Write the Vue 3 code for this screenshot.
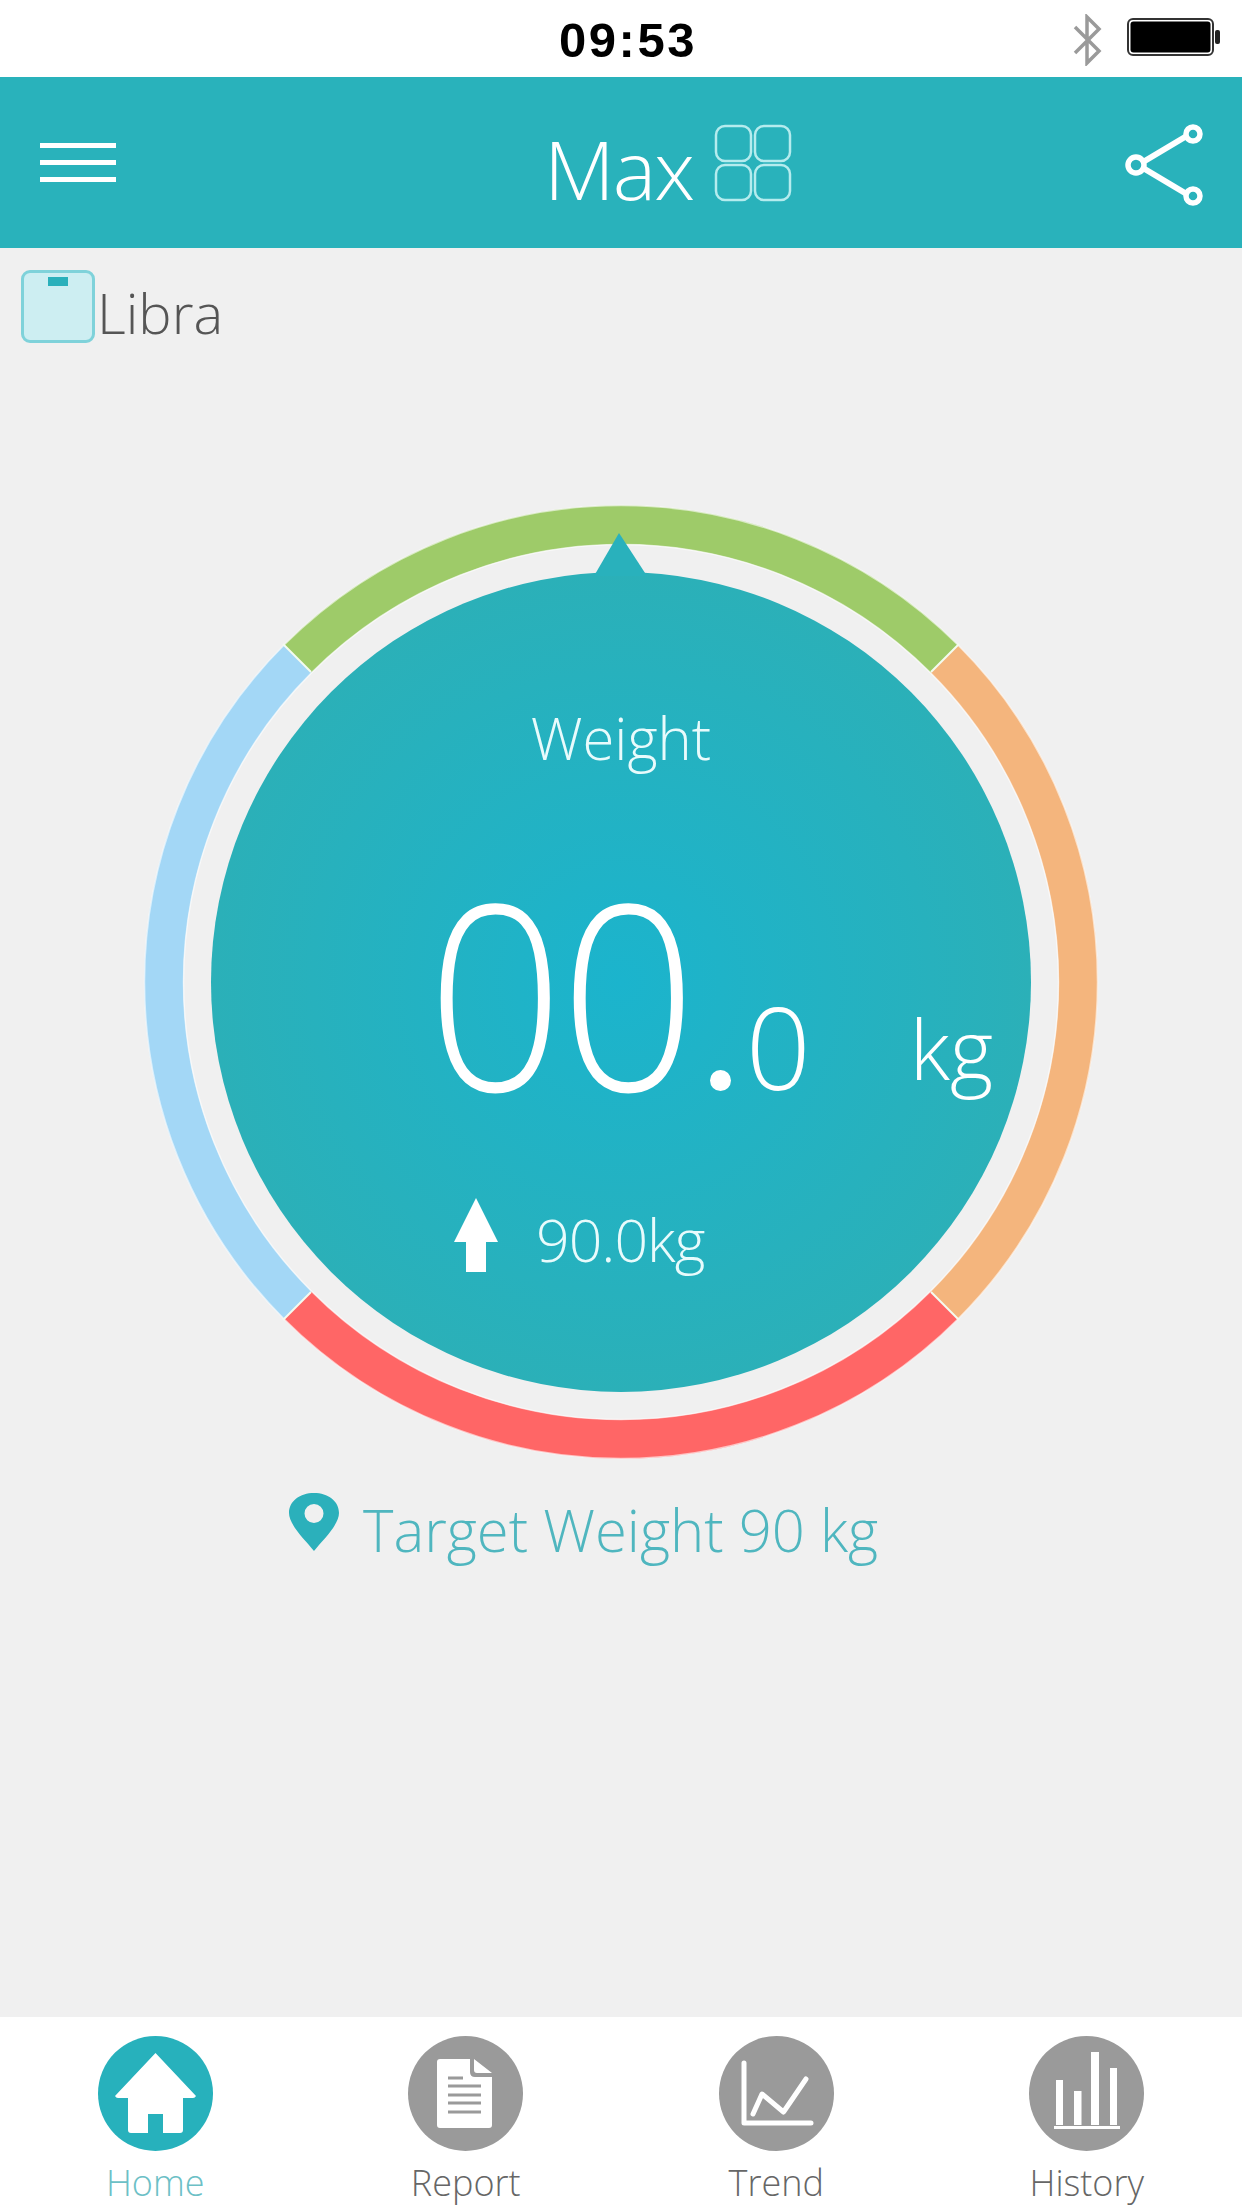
<script setup>
const tabs = [
  { key: 'home', label: 'Home', active: true },
  { key: 'report', label: 'Report' },
  { key: 'trend', label: 'Trend' },
  { key: 'history', label: 'History' },
]
</script>

<template>
  <div class="screen">
    <div class="status">
      <span class="time">09:53</span>
      <div class="status-right">
        <svg class="bt" width="32" height="52" viewBox="0 0 32 52"><path d="M4 13 L28 37 L16 49 V3 L28 15 L4 39" fill="none" stroke="#9a9a9a" stroke-width="3.5"/></svg>
        <svg class="battery" width="95" height="38" viewBox="0 0 95 38">
          <rect x="1" y="1" width="85" height="36" rx="5" fill="#fff" stroke="#333" stroke-width="2"/>
          <rect x="3.5" y="3.5" width="80" height="31" rx="3" fill="#000"/>
          <rect x="88" y="12" width="5" height="14" rx="2" fill="#222"/>
        </svg>
      </div>
    </div>

    <header class="header">
      <div class="burger"><i></i><i></i><i></i></div>
      <div class="title">
        <span>Max</span>
        <svg width="78" height="78" viewBox="0 0 78 78">
          <g fill="none" stroke="#b5ecee" stroke-width="2.5">
            <rect x="2" y="2" width="35" height="35" rx="9"/>
            <rect x="41" y="2" width="35" height="35" rx="9"/>
            <rect x="2" y="41" width="35" height="35" rx="9"/>
            <rect x="41" y="41" width="35" height="35" rx="9"/>
          </g>
        </svg>
      </div>
      <svg class="share" width="82" height="82" viewBox="0 0 82 82">
        <path d="M14 41 L66 10 M14 41 L66 72" stroke="#fff" stroke-width="6" fill="none"/>
        <g fill="#29b2bb" stroke="#fff" stroke-width="5.5">
          <circle cx="12" cy="41" r="8"/><circle cx="69" cy="10" r="7"/><circle cx="69" cy="72" r="7"/>
        </g>
      </svg>
    </header>

    <main class="main">
      <div class="device">
        <span class="scale"><i></i></span>
        <span class="device-name">Libra</span>
      </div>

      <div class="gauge">
        <svg width="956" height="956" viewBox="0 0 956 956">
          <defs>
            <radialGradient id="disc" cx="50%" cy="50%" r="50%">
              <stop offset="0%" stop-color="#1bb4cd"/>
              <stop offset="100%" stop-color="#2bb0b8"/>
            </radialGradient>
          </defs>
          <g fill="none" stroke-width="39">
            <path d="M154.7 154.7 A457 457 0 0 1 801.3 154.7" stroke="#9ecb69"/>
            <path d="M801.3 154.7 A457 457 0 0 1 801.3 801.3" stroke="#f4b57d"/>
            <path d="M801.3 801.3 A457 457 0 0 1 154.7 801.3" stroke="#ff6666"/>
            <path d="M154.7 801.3 A457 457 0 0 1 154.7 154.7" stroke="#a3d7f6"/>
          </g>
          <g fill="none" stroke="#fff" stroke-opacity=".6" stroke-width="1.5">
            <circle cx="478" cy="478" r="476.5"/>
            <circle cx="478" cy="478" r="437.5"/>
          </g>
          <path d="M140 140 L168 168 M816 140 L788 168 M816 816 L788 788 M140 816 L168 788" stroke="#f4fbef" stroke-width="2"/>
          <circle cx="478" cy="478" r="410" fill="url(#disc)"/>
          <path d="M451 72 L476 29 L504 72 Z" fill="#29b1bc"/>
        </svg>
        <div class="readout">
          <div class="label">Weight</div>
          <div class="value">
            <span class="big">00</span><span class="dot"></span><span class="dec">0</span><span class="unit">kg</span>
          </div>
          <div class="last">
            <svg width="44" height="74" viewBox="0 0 44 74"><path d="M22 0 L44 44 H32 V74 H12 V44 H0 Z" fill="#fff"/></svg>
            <span>90.0kg</span>
          </div>
        </div>
      </div>

      <div class="target">
        <svg width="50" height="58" viewBox="0 0 50 58"><path fill-rule="evenodd" d="M25 0 C39 0 50 8 50 20 C50 32 33 48 25 58 C17 48 0 32 0 20 C0 8 11 0 25 0 Z M25 11 A9.5 9.5 0 1 0 25 30 A9.5 9.5 0 1 0 25 11 Z" fill="#2bb0bb"/></svg>
        <span>Target Weight 90 kg</span>
      </div>
    </main>

    <nav class="tabs">
      <div v-for="t in tabs" :key="t.key" class="tab" :class="{ active: t.active }">
        <svg width="115" height="115" viewBox="0 0 115 115">
          <circle cx="57.5" cy="57.5" r="57.5" class="disc"/>
          <path v-if="t.key === 'home'" d="M57.5 17 L98 60 Q97 62 95 62 H85 V94 Q85 97 82 97 H65 V78 H50 V97 H33 Q30 97 30 94 V62 H20 Q18 62 17 60 Z" fill="#fff"/>
          <template v-if="t.key === 'report'">
            <path d="M32 23 H62 V36 Q62 41 67 41 H84 V89 Q84 92 81 92 H32 Q29 92 29 89 V26 Q29 23 32 23 Z M66 23 L84 37 H69 Q66 37 66 34 Z" fill="#fff"/>
            <path d="M40 42 H55 M40 50 H73 M40 59 H73 M40 67 H73 M40 76 H73" stroke="#9a9a9a" stroke-width="3"/>
          </template>
          <g v-if="t.key === 'trend'" fill="none" stroke="#fff" stroke-width="5" stroke-linecap="round" stroke-linejoin="round">
            <path d="M25 27 V87 H92"/>
            <path d="M34 78 L43 58 L64.5 76 L87 43"/>
          </g>
          <g v-if="t.key === 'history'" fill="#fff">
            <rect x="27" y="44" width="7" height="45"/>
            <rect x="45" y="55" width="7.5" height="34"/>
            <rect x="62" y="16" width="8" height="73"/>
            <rect x="81" y="32" width="7" height="57"/>
            <rect x="25" y="90" width="66" height="3"/>
          </g>
        </svg>
        <span class="tab-label">{{ t.label }}</span>
      </div>
    </nav>
  </div>
</template>

<style>
html, body { margin: 0; padding: 0; }
</style>

<style scoped>
.screen {
  width: 1242px;
  height: 2208px;
  display: flex;
  flex-direction: column;
  background: #f0f0f0;
  font-family: "Open Sans", "Noto Sans", sans-serif;
  font-weight: 300;
  overflow: hidden;
}
.status {
  height: 77px;
  background: #fff;
  position: relative;
  display: flex;
  justify-content: center;
  align-items: center;
  flex: none;
}
.time {
  font-family: "Liberation Sans", sans-serif;
  font-weight: 700;
  font-size: 49px;
  letter-spacing: 2.5px;
  color: #000;
  margin-left: 14px;
  margin-top: 3px;
}
.status-right {
  position: absolute;
  right: 20px;
  top: 14px;
  display: flex;
  align-items: center;
  gap: 24px;
}
.battery { margin-top: -6px; }
.header {
  height: 171px;
  flex: none;
  background: #29b2bb;
  display: flex;
  justify-content: space-between;
  align-items: flex-start;
  padding: 0 36px 0 40px;
  box-sizing: border-box;
  color: #fff;
}
.burger {
  width: 76px;
  padding-top: 66px;
  display: flex;
  flex-direction: column;
  gap: 12px;
}
.burger i { display: block; height: 5px; background: #fff; }
.title {
  display: flex;
  align-items: flex-start;
  gap: 21px;
  margin-top: 47px;
  margin-left: 96px;
}
.title span { font-size: 82px; line-height: 92px; font-weight: 300; letter-spacing: -2px; margin-top: -2px; }
.share { margin-top: 47px; }
.main { flex: 1; display: flex; flex-direction: column; align-items: center; }
.device {
  align-self: flex-start;
  display: flex;
  align-items: flex-start;
  padding: 22px 0 0 21px;
}
.scale {
  width: 74px;
  height: 73px;
  box-sizing: border-box;
  background: #cdeef2;
  border: 3px solid #7fd2da;
  border-radius: 9px;
  display: flex;
  justify-content: center;
}
.scale i { display: block; width: 20px; height: 9px; background: #2ab0bb; margin-top: 4px; }
.device-name { font-size: 56px; line-height: 84px; color: #555; margin-left: 2px; }
.gauge {
  width: 956px;
  height: 956px;
  margin-top: 150px;
  position: relative;
  flex: none;
}
.gauge > svg { display: block; }
.readout {
  position: absolute;
  inset: 0;
  color: #fff;
  display: flex;
  flex-direction: column;
  align-items: center;
}
.label { font-size: 58px; line-height: 84px; margin-top: 192px; color: #e8fbfc; }
.value {
  align-self: flex-start;
  display: flex;
  align-items: flex-end;
  padding-left: 284px;
  margin-top: 101px;
  height: 220px;
}
.big { font-size: 259px; line-height: 220px; letter-spacing: -4px; transform: scaleX(.925); transform-origin: left center; margin-right: -22px; }
.dot { width: 21px; height: 21px; border-radius: 50%; background: #fff; margin: 0 15px 10px 17px; flex: none; }
.dec { font-size: 114px; line-height: 110px; font-weight: 300; }
.unit { font-size: 83px; line-height: 110px; margin-left: 99px; margin-bottom: -2px; }
.last {
  align-self: flex-start;
  display: flex;
  align-items: center;
  gap: 38px;
  padding-left: 311px;
  margin-top: 90px;
}
.last span { font-size: 59px; line-height: 80px; color: #e8fbfc; letter-spacing: -1px; margin-top: 8px; }
.target {
  align-self: flex-start;
  display: flex;
  align-items: flex-start;
  gap: 24px;
  margin-top: 33px;
  padding-left: 289px;
  color: #4fb6bf;
}
.target span { font-size: 58px; line-height: 80px; margin-top: -3px; }
.tabs {
  height: 191px;
  flex: none;
  background: #fff;
  display: grid;
  grid-template-columns: repeat(4, 1fr);
  padding-top: 19px;
  box-sizing: border-box;
}
.tab { display: flex; flex-direction: column; align-items: center; }
.tab svg { display: block; }
.disc { fill: #9a9a9a; }
.tab.active .disc { fill: #27b1bc; }
.tab-label { font-size: 36px; line-height: 48px; margin-top: 8px; color: #666; }
.tab.active .tab-label { color: #6cc0c6; }
</style>
